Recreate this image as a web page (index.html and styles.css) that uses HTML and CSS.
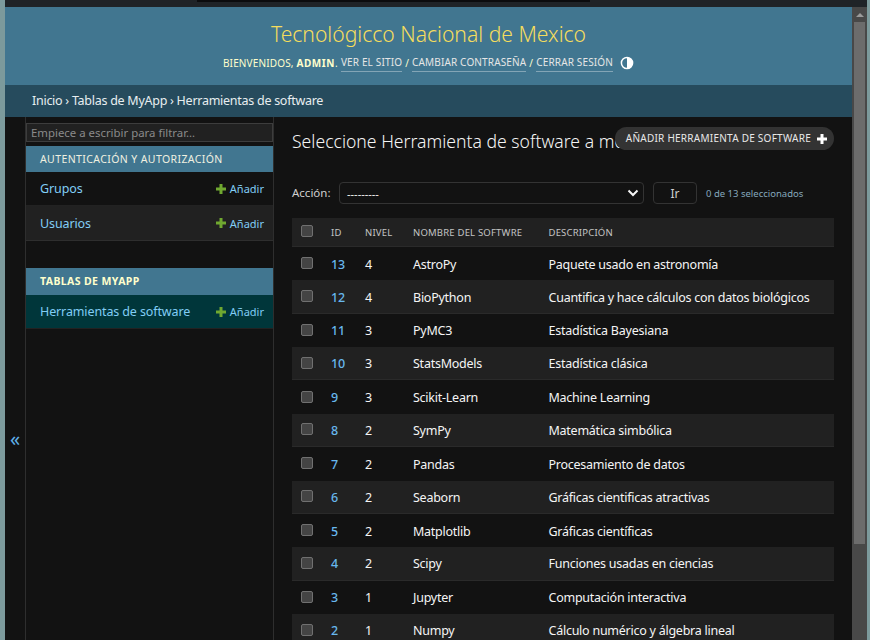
FILE: index.html
```html
<!doctype html>
<html lang="es">
<head>
    <meta charset="UTF-8">
    <title>Seleccione Herramienta de software a modificar</title>
    <link rel="stylesheet" href="styles.css">
</head>
<body>
    <div class="edge"></div>

    <div class="frame">
        <div class="topbar"><span class="topbar-tab"></span></div>

        <div class="window">
            <div class="page">
                <header class="site-header">
                    <h1 class="site-name">Tecnológicco Nacional de Mexico</h1>
                    <div class="user-tools">
                        <span>Bienvenidos, <strong>admin</strong>.</span>
                        <a href="#">Ver el sitio</a> /
                        <a href="#">Cambiar contraseña</a> /
                        <a href="#">Cerrar sesión</a>
                        <svg class="theme-icon" width="14" height="14" viewBox="0 0 14 14">
                            <circle cx="7" cy="7" r="5.6" fill="none" stroke="#fff" stroke-width="1.5"/>
                            <path d="M7 1.4a5.6 5.6 0 0 1 0 11.2z" fill="#fff"/>
                        </svg>
                    </div>
                </header>

                <div class="breadcrumbs">Inicio › Tablas de MyApp › Herramientas de software</div>

                <div class="main">
                    <button class="toggle-nav">«</button>

                    <nav class="sidebar">
                        <input class="nav-filter" type="text" placeholder="Empiece a escribir para filtrar…">

                        <div class="app-caption">Autenticación y autorización</div>
                        <div class="model-row">
                            <a href="#">Grupos</a>
                            <span class="add-link"><svg class="plus" width="10" height="10" viewBox="0 0 10 10"><path d="M5 0v10M0 5h10" stroke="#70a830" stroke-width="3"/></svg>Añadir</span>
                        </div>
                        <div class="model-row alt">
                            <a href="#">Usuarios</a>
                            <span class="add-link"><svg class="plus" width="10" height="10" viewBox="0 0 10 10"><path d="M5 0v10M0 5h10" stroke="#70a830" stroke-width="3"/></svg>Añadir</span>
                        </div>

                        <div class="app-caption current">Tablas de MyApp</div>
                        <div class="model-row selected">
                            <a href="#">Herramientas de software</a>
                            <span class="add-link"><svg class="plus" width="10" height="10" viewBox="0 0 10 10"><path d="M5 0v10M0 5h10" stroke="#70a830" stroke-width="3"/></svg>Añadir</span>
                        </div>
                    </nav>

                    <main class="content">
                        <h2 class="title">Seleccione Herramienta de software a modificar</h2>
                        <a class="add-tool" href="#"><span>Añadir Herramienta de software</span> <svg class="add-cross" width="10" height="10" viewBox="0 0 10 10"><path d="M5 0v10M0 5h10" stroke="#fff" stroke-width="3"/></svg></a>

                        <div class="actions">
                            <label class="action-label">Acción:</label>
                            <div class="select-box">
                                <span>---------</span>
                                <svg width="12" height="8" viewBox="0 0 12 8"><path d="M1.5 1.5 6 6l4.5-4.5" fill="none" stroke="#f5f5f5" stroke-width="2"/></svg>
                            </div>
                            <button class="go">Ir</button>
                            <span class="counter">0 de 13 seleccionados</span>
                        </div>

                        <div class="results">
                            <div class="row head">
                                <span class="check"></span><span>ID</span><span>Nivel</span><span>Nombre del softwre</span><span>Descripción</span>
                            </div>
                            <div class="row"><span class="check"></span><a href="#">13</a><span>4</span><span>AstroPy</span><span>Paquete usado en astronomía</span></div>
                            <div class="row alt"><span class="check"></span><a href="#">12</a><span>4</span><span>BioPython</span><span>Cuantifica y hace cálculos con datos biológicos</span></div>
                            <div class="row"><span class="check"></span><a href="#">11</a><span>3</span><span>PyMC3</span><span>Estadística Bayesiana</span></div>
                            <div class="row alt"><span class="check"></span><a href="#">10</a><span>3</span><span>StatsModels</span><span>Estadística clásica</span></div>
                            <div class="row"><span class="check"></span><a href="#">9</a><span>3</span><span>Scikit-Learn</span><span>Machine Learning</span></div>
                            <div class="row alt"><span class="check"></span><a href="#">8</a><span>2</span><span>SymPy</span><span>Matemática simbólica</span></div>
                            <div class="row"><span class="check"></span><a href="#">7</a><span>2</span><span>Pandas</span><span>Procesamiento de datos</span></div>
                            <div class="row alt"><span class="check"></span><a href="#">6</a><span>2</span><span>Seaborn</span><span>Gráficas cientificas atractivas</span></div>
                            <div class="row"><span class="check"></span><a href="#">5</a><span>2</span><span>Matplotlib</span><span>Gráficas científicas</span></div>
                            <div class="row alt"><span class="check"></span><a href="#">4</a><span>2</span><span>Scipy</span><span>Funciones usadas en ciencias</span></div>
                            <div class="row"><span class="check"></span><a href="#">3</a><span>1</span><span>Jupyter</span><span>Computación interactiva</span></div>
                            <div class="row alt"><span class="check"></span><a href="#">2</a><span>1</span><span>Numpy</span><span>Cálculo numérico y álgebra lineal</span></div>
                        </div>
                    </main>
                </div>
            </div>

            <div class="scrollbar">
                <span class="scroll-up"></span>
                <span class="scroll-thumb"></span>
            </div>
        </div>
    </div>

    <div class="edge right"></div>
</body>
</html>
```

FILE: styles.css
```css
html, body {
    margin: 0;
    padding: 0;
    height: 640px;
    overflow: hidden;
}

body {
    display: flex;
    background: #121212;
    color: #f5dd5d;
    font-family: "Noto Sans", sans-serif;
    font-size: 13px;
}

a {
    text-decoration: none;
}

.edge {
    width: 5px;
    flex: none;
    background: #7c9a9c;
}

.edge.right {
    width: 3px;
}

.frame {
    flex: 1;
    min-width: 0;
    display: flex;
    flex-direction: column;
}

.topbar {
    height: 7px;
    flex: none;
    background: #1f2327;
}

.topbar-tab {
    display: block;
    width: 393px;
    height: 2px;
    margin-left: 192px;
    background: #0b0c0e;
}

.window {
    flex: 1;
    min-height: 0;
    display: flex;
}

.page {
    flex: 1;
    min-width: 0;
    display: flex;
    flex-direction: column;
}

.site-header {
    height: 78px;
    box-sizing: border-box;
    padding-top: 10px;
    background: #417690;
    text-align: center;
}

.site-name {
    margin: 0;
    font-size: 21.1px;
    font-weight: 300;
    line-height: 33px;
    color: #f5dd5d;
}

.user-tools {
    margin-top: 3px;
    font-size: 10px;
    line-height: 18px;
    letter-spacing: 0.15px;
    text-transform: uppercase;
    color: #ffc;
    display: flex;
    justify-content: center;
    align-items: center;
    gap: 3px;
}

.user-tools strong {
    font-weight: 700;
    letter-spacing: 0.6px;
}

.user-tools a {
    color: #e6e6e6;
    border-bottom: 1px solid rgba(255, 255, 255, 0.35);
}

.theme-icon {
    margin-left: 4px;
}

.breadcrumbs {
    height: 32px;
    box-sizing: border-box;
    padding-left: 27px;
    background: #264b5d;
    color: #e8eef0;
    font-size: 12.5px;
    letter-spacing: -0.27px;
    line-height: 32px;
}

.main {
    flex: 1;
    min-height: 0;
    display: flex;
    overflow: hidden;
}

.toggle-nav {
    width: 20px;
    flex: none;
    padding: 120px 0 0;
    border: 0;
    background: #121212;
    color: #5fb0e8;
    font-family: inherit;
    font-size: 20px;
}

.sidebar {
    width: 247px;
    flex: none;
    padding: 6px 0 0;
    border-left: 1px solid #2e2e2e;
    border-right: 1px solid #2e2e2e;
}

.nav-filter {
    display: block;
    width: 100%;
    height: 19px;
    box-sizing: border-box;
    margin: 0 0 4px;
    padding: 0 4px;
    border: 1px solid #3d3d3d;
    background: #212121;
    color: #eee;
    font-family: inherit;
    font-size: 11.4px;
}

.nav-filter::placeholder {
    color: #8a8a8a;
}

.app-caption {
    height: 26px;
    padding-left: 14px;
    background: #417690;
    color: #f0f0e0;
    font-size: 10.5px;
    line-height: 26px;
    letter-spacing: 0.4px;
    text-transform: uppercase;
}

.app-caption.current {
    height: 27px;
    margin-top: 27px;
    font-size: 10.5px;
    line-height: 27px;
    letter-spacing: 0.4px;
    font-weight: 700;
    color: #ffc;
}

.model-row {
    height: 33px;
    padding: 0 9px 0 14px;
    display: flex;
    justify-content: space-between;
    align-items: center;
    border-bottom: 1px solid #222;
    background: #121212;
    font-size: 12.5px;
    letter-spacing: -0.12px;
}

.model-row.alt {
    height: 34px;
    background: #212121;
    border-bottom-color: #2e2e2e;
}

.model-row.selected {
    background: #00363a;
}

.model-row a {
    color: #81cdf5;
}

.add-link {
    display: flex;
    align-items: center;
    gap: 4px;
    color: #81cdf5;
    font-size: 11px;
    letter-spacing: 0;
}

.content {
    flex: 1;
    min-width: 0;
    padding: 0 18px;
    position: relative;
}

.title {
    margin: 12px 0 0;
    font-size: 17.6px;
    font-weight: 300;
    line-height: 24px;
    color: #f5f5f5;
    white-space: nowrap;
}

.add-tool {
    position: absolute;
    top: 10px;
    right: 18px;
    height: 23px;
    padding: 0 7px 0 11px;
    display: flex;
    align-items: center;
    gap: 6px;
    border-radius: 12px;
    background: #333;
    color: #e8e8e8;
    font-size: 10px;
    letter-spacing: 0.25px;
    text-transform: uppercase;
    white-space: nowrap;
}

.add-tool span {
    margin-top: -1px;
}

.actions {
    margin-top: 29px;
    height: 22px;
    display: flex;
    align-items: center;
    color: #cfcfcf;
    font-size: 11.5px;
}

.action-label {
    width: 47px;
    flex: none;
    margin-top: -1px;
}

.select-box {
    width: 305px;
    height: 22px;
    box-sizing: border-box;
    flex: none;
    padding: 0 4px 0 7px;
    border: 1px solid #333;
    border-radius: 4px;
    display: flex;
    justify-content: space-between;
    align-items: center;
    color: #f5f5f5;
    font-size: 11px;
}

.go {
    width: 44px;
    height: 22px;
    flex: none;
    margin-left: 9px;
    border: 1px solid #333;
    border-radius: 4px;
    background: #121212;
    color: #cfcfcf;
    font-family: inherit;
    font-size: 12px;
}

.counter {
    margin-left: 9px;
    color: #86a8bc;
    font-size: 9.5px;
}

.results {
    margin-top: 14px;
}

.row {
    display: grid;
    grid-template-columns: 30px 34px 48px 135.5px 1fr;
    height: 33.37px;
    box-sizing: border-box;
    align-items: center;
    padding-left: 9px;
    padding-top: 1px;
    color: #f5f5f5;
    font-size: 12.5px;
    letter-spacing: -0.25px;
}

.row a {
    color: #68b8ee;
    font-weight: 500;
}

.row.alt {
    background: #212121;
    border-bottom: 1px solid #2a2a2a;
}

.row.head {
    height: 29px;
    padding-top: 0;
    background: #212121;
    border-bottom: 1px solid #2a2a2a;
    color: #c4c4c4;
    font-size: 9.5px;
    letter-spacing: 0.2px;
    text-transform: uppercase;
}

.check {
    width: 10px;
    height: 10px;
    border: 1px solid #707070;
    border-radius: 2px;
    background: #444;
    margin-top: -2px;
}

.scrollbar {
    width: 15px;
    flex: none;
    box-sizing: border-box;
    padding: 6px 2px 0;
    background: #484848;
    display: flex;
    flex-direction: column;
}

.scroll-up {
    height: 0;
    width: 0;
    margin: 0 auto 5px;
    border-left: 4px solid transparent;
    border-right: 4px solid transparent;
    border-bottom: 4px solid #9a9a9a;
}

.scroll-thumb {
    height: 522px;
    background: #6c6c6c;
}
```
